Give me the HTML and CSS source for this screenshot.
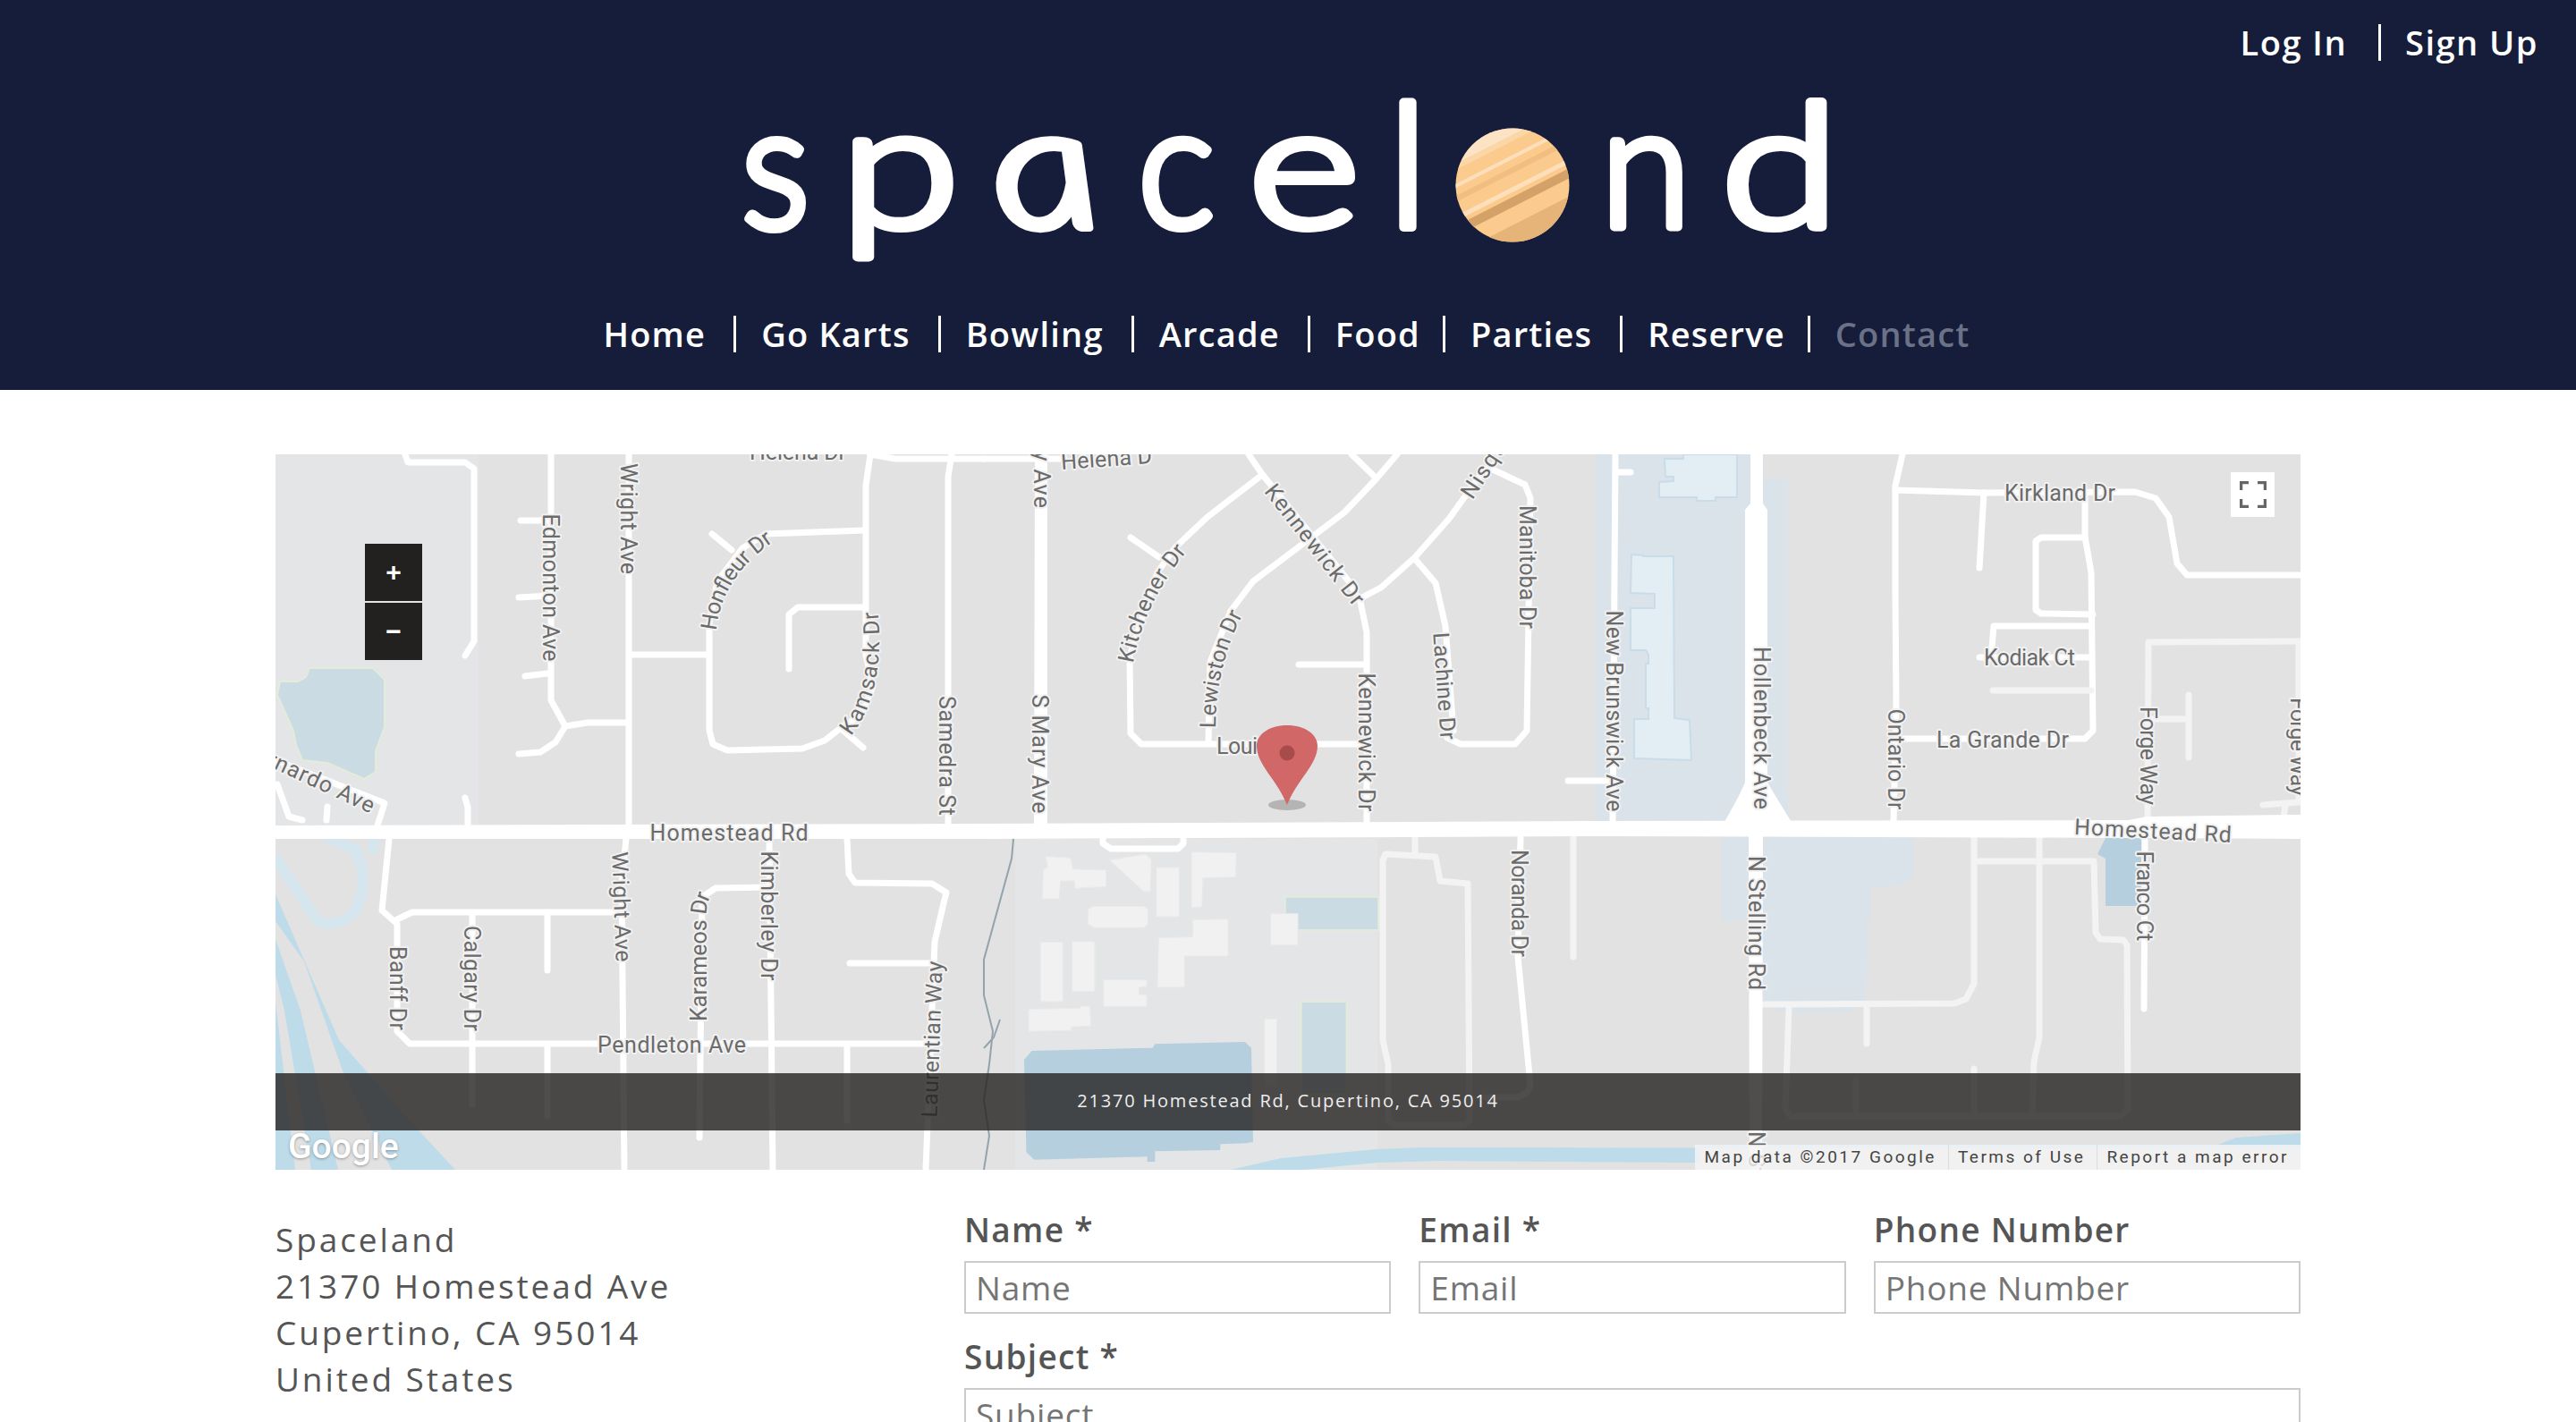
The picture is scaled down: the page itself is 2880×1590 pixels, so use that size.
FILE: index.html
```html
<!DOCTYPE html>
<html lang="en">
<head>
    <meta charset="UTF-8">
    <title>Contact - Spaceland</title>
    <link rel="stylesheet" href="styles.css">
</head>
<body>

    <header class="site-header">
        <div class="account-links">
            <a href="#">Log In</a>
            <a href="#">Sign Up</a>
        </div>

        <svg class="logo" viewBox="800 68 1280 272" role="img" aria-label="spaceland">
            <defs>
                <clipPath id="planetClip"><circle cx="64" cy="64" r="63.500"/></clipPath>
            </defs>
            <g class="logo-letters">
                <text transform="translate(867 254) scale(.93 1)">s</text>
                <text transform="translate(1006 254) scale(1.25 1)">p</text>
                <text class="logo-a" transform="translate(1183 254) scale(1.25 1) skewX(13)">a</text>
                <text transform="translate(1315 254) scale(.94 1)">c</text>
                <text transform="translate(1458 254) scale(1.24 1)">e</text>
                <text transform="translate(1574 254)">l</text>
                <text transform="translate(1840 254) scale(.95 1)">n</text>
                <text transform="translate(1990 254) scale(1.24 1)">d</text>
            </g>
            <svg x="1627" y="143" width="128" height="128" viewBox="0 0 128 128">
                <g clip-path="url(#planetClip)">
                    <rect width="128" height="128" fill="#fbcb8e"/>
                    <g transform="rotate(-27 64 64)">
                        <rect x="-40" y="-30" width="210" height="44" fill="#fde3c6"/>
                        <rect x="-40" y="14" width="210" height="6" fill="#fbd6a6"/>
                        <rect x="-40" y="34" width="210" height="4" fill="#fde0bb"/>
                        <rect x="-40" y="46" width="210" height="6" fill="#f1bd80"/>
                        <rect x="-40" y="66" width="210" height="5" fill="#fde0bb"/>
                        <rect x="-40" y="76" width="210" height="10" fill="#d4a268"/>
                        <rect x="-40" y="104" width="210" height="80" fill="#e6b378"/>
                        <rect x="-40" y="134" width="210" height="6" fill="#eec08b"/>
                    </g>
                </g>
            </svg>
        </svg>

        <nav class="main-nav">
            <a href="#">Home</a>
            <a href="#">Go Karts</a>
            <a href="#">Bowling</a>
            <a href="#">Arcade</a>
            <a href="#" class="tight">Food</a>
            <a href="#">Parties</a>
            <a href="#" class="tight">Reserve</a>
            <a href="#" class="current">Contact</a>
        </nav>
    </header>

    <main class="content">
        <section class="map">
            <svg class="map-canvas" viewBox="308 508 2264 800" aria-label="Map of Homestead Rd, Cupertino">
                <defs>
                    <path id="lblHonfleur" d="M792 704 Q798 640 860 598"/>
                    <path id="lblKamsack" d="M944 818 Q982 770 972 678"/>
                    <path id="lblKitchener" d="M1258 740 Q1270 670 1322 608"/>
                    <path id="lblLewiston" d="M1350 814 Q1350 740 1384 678"/>
                    <path id="lblKarameos" d="M781 1142 L781 1020 Q781 1005 790 992"/>
                </defs>

                <!-- land use -->
                <rect x="308" y="508" width="227" height="430" fill="#e4e5e7"/>
                <rect x="1135" y="938" width="405" height="370" fill="#e4e5e6"/>
                <rect x="1784" y="508" width="188" height="415" fill="#dbe3ea"/>
                <rect x="1972" y="535" width="27" height="388" fill="#dbe3ea"/>
                <path class="campus" d="M1925 935H2139V980Q2130 993 2091 993L2086 1117Q2075 1133 2055 1133H1999L1973 1127L1953 1030H1925Z"/>

                <!-- water -->
                <path class="pond" d="M346 747L417 747L430 760L430 813L420 840L420 863L407 871L366 853L338 850L331 833L328 817L310 777L313 762L333 762L342 757Z"/>
                <path class="ramp" d="M359 933L397 950Q414 980 397 1020Q380 1036 360 1032Q345 1020 336 1000L308 960M419 932L417 950"/>
                <path class="freeway" d="M308 1000L379 1163L458 1253L509 1308H438L384 1200L340 1075L308 1030ZM308 1050L336 1130L378 1308H348L318 1130L308 1090ZM308 1120L330 1308H308Z"/>
                <path class="river" d="M1376 1308L1432 1295L1539 1285L1590 1283L2572 1284V1267L2500 1272L2480 1280H1900V1300L1610 1298L1539 1300L1457 1308Z"/>
                <path class="lake" d="M2354 937H2394V1013H2354V960L2345 955Z"/>

                <g transform="translate(1100 920) scale(.5102 .3333)">
                    <path class="lake" d="M105 765L370 755L375 742L572 735L586 755L590 1070L575 1075L518 1078L518 1098L375 1102L375 1137L358 1137L358 1120L110 1130L93 1105L88 795Z"/>
                    <path class="pond" d="M660 248H865V360H660Z"/>
                    <path class="pond" d="M695 600H795V910H695Z"/>
                    <g class="building">
                        <path d="M135 112L190 118L195 155L268 158L268 215L215 218L200 222L198 195L168 195L165 255L128 255L130 155L140 150Z"/>
                        <path d="M275 125L355 105L367 125L365 230L350 230Z"/>
                        <path d="M378 150H428V315H378Z"/>
                        <path d="M455 98L553 100L552 182L480 185L478 282L455 285Z"/>
                        <path d="M228 290L240 280H350L360 290V340L350 352H240L228 340Z"/>
                        <path d="M458 325L535 323L535 447L440 447L440 552L380 552L383 385L458 383Z"/>
                        <path d="M124 400H173V600H124Z"/>
                        <path d="M193 398H243V566H193Z"/>
                        <path d="M262 527L357 527L357 550L340 552L340 575L357 577L357 616L262 616Z"/>
                        <path d="M98 625L210 622L212 615L232 615L235 682L192 685L192 697L98 700Z"/>
                        <path d="M628 305H688V410H628Z"/>
                        <path d="M615 658H642V885H615Z"/>
                    </g>
                </g>

                <g class="tower">
                    <path d="M1861 513L1882 513L1882 508L1942 508L1942 556L1918 556L1918 560L1897 560L1897 556L1855 556L1855 539L1871 538L1871 533L1862 533Z"/>
                    <path d="M1824 620L1837 621L1837 622L1871 622L1872 803L1889 805L1891 850L1827 848L1827 804L1843 804L1843 792L1840 792L1840 742L1843 742L1843 732L1840 727L1823 727L1823 680L1850 680L1850 664L1823 663Z"/>
                </g>
                <path class="creek" d="M1133 938L1131 960L1100 1073V1113L1110 1153L1106 1190L1100 1230L1106 1270L1100 1308"/>
                <path class="creek" d="M1118 1140L1111 1160L1100 1172"/>

                <!-- streets north of Homestead -->
                <g class="road">
                    <path d="M703 508V923"/>
                    <path d="M616 508V783L632 812L657 808H700M632 812L621 830L604 841L580 843"/>
                    <path d="M582 582H616M580 668L616 666M587 756L612 753"/>
                    <path d="M453 508L456 517H520L530 524V717L520 733M520 892L523 903V923"/>
                    <path d="M966 593L856 597L830 613L802 650L793 697V817L797 832L813 839L897 837L922 828L945 810"/>
                    <path d="M796 597L818 615M707 732H792"/>
                    <path d="M973 508L968 543V733L976 767L963 800L945 810M943 817L965 836"/>
                    <path d="M966 679H892L882 687V748"/>
                    <path d="M1064 508L1060 533V923"/>
                    <path d="M973 508L1001 513H1100"/>
                    <path d="M1100 513H1190"/>
                    <path d="M308 850L430 898L422 923M310 877L323 913L338 917M366 902L365 917"/>
                    <path d="M1396 508L1411 530L1508 650L1521 673L1528 707V921"/>
                    <path d="M1411 531L1350 578L1314 612L1294 640L1263 733L1264 820L1276 832H1523"/>
                    <path d="M1264 601L1296 623"/>
                    <path d="M1562 508L1539 535L1503 573L1401 650L1376 683L1353 740L1351 830M1511 508L1539 535"/>
                    <path d="M1523 668L1544 657L1582 623L1620 580L1656 530L1669 520"/>
                    <path d="M1669 525L1705 542L1711 557L1707 817L1694 832H1633L1618 825"/>
                    <path d="M1582 625L1605 652L1616 700L1625 817"/>
                    <path d="M1452 743H1528M1753 873H1803M1806 528H1823"/>
                    <path d="M1806 508L1803 921"/>
                    <path d="M2127 508L2119 543V667L2120 787L2117 919"/>
                    <path d="M2119 548L2218 551L2387 550L2410 557L2425 578L2434 630L2445 643H2572"/>
                    <path d="M2218 551L2213 635"/>
                    <path d="M2331 550V600L2338 640L2340 817L2331 826H2127"/>
                    <path d="M2331 601H2282L2276 605V682L2282 686L2340 687"/>
                    <path d="M2338 700H2229L2226 735M2213 735H2338"/>
                    <path class="road-soft" d="M2228 772H2338"/>
                    <path class="road-soft" d="M2570 717L2402 718L2401 913"/>
                    <path class="road-soft" d="M2402 804H2447M2447 777V847"/>
                    <path class="road-soft" d="M2570 717V897L2530 900M2555 900L2553 915"/>
                </g>

                <!-- streets south of Homestead -->
                <g class="road">
                    <path d="M435 938L427 1018L444 1033V1153L458 1167H1050"/>
                    <path d="M444 1028L461 1020H688"/>
                    <path d="M528 1023V1235M612 1022V1085M612 1168V1248"/>
                    <path d="M700 938L695 987L698 1308"/>
                    <path d="M859 992L800 993L785 1003L782 1272"/>
                    <path d="M860 938L864 1308"/>
                    <path d="M947 938L949 977L956 987L1042 988L1058 998L1055 1010L1045 1053L1035 1308"/>
                    <path d="M950 1077H1040M947 1168V1253"/>
                    <path d="M1233 938V943L1242 949H1317L1323 943V938"/>
                    <path d="M1700 937L1697 1070L1711 1213L1707 1222L1697 1227H1661"/>
                    <path class="road-soft" d="M1582 938V955M1549 955L1605 958L1610 985L1641 988L1643 1253L1636 1258H1559L1552 1253V1190L1546 1163V962L1549 955Z"/>
                    <path class="road-soft" d="M1759 937V1070"/>
                    <path class="road-soft" d="M2207 935V1100L2198 1117L2185 1122L1971 1123"/>
                    <path class="road-soft" d="M2208 963H2341L2343 1043L2348 1050L2374 1051L2378 1057L2379 1240L2371 1248H2002L1996 1240L2000 1127"/>
                    <path class="road-soft" d="M2280 935V1160L2274 1187L2272 1245"/>
                    <path class="road-soft" d="M2087 1127V1167M2075 1207V1245M2207 1195V1245"/>
                    <path d="M2398 940L2397 1128"/>
                </g>

                <!-- main roads -->
                <path class="road-main" d="M308 923L1100 921L1800 918L2380 917L2400 913L2572 911V938L2400 937L1800 935L1100 938L308 938Z"/>
                <path class="road-main" d="M1957 508H1971V563L1976 570V875L1985 890L2004 921H1927L1944 890L1951 875V570L1957 563Z"/>
                <path class="road-main" d="M1955 935H1971L1970 1308H1956Z"/>
                <path class="road-main" d="M1157 508H1171V921H1156Z"/>

                <!-- street names -->
                <g class="label">
                    <text transform="translate(892 505)" textLength="108">Helena Dr</text>
                    <text transform="translate(1237 513) rotate(-4)" textLength="102">Helena D</text>
                    <text transform="translate(1164 500) rotate(90)" textLength="136">S Mary Ave</text>
                    <text transform="translate(615 657) rotate(90)" textLength="165">Edmonton Ave</text>
                    <text transform="translate(702 580) rotate(90)" textLength="124">Wright Ave</text>
                    <text textLength="130"><textPath href="#lblHonfleur">Honfleur Dr</textPath></text>
                    <text textLength="140"><textPath href="#lblKamsack">Kamsack Dr</textPath></text>
                    <text transform="translate(1058 845) rotate(90)" textLength="134">Samedra St</text>
                    <text transform="translate(1162 843) rotate(90)" textLength="133">S Mary Ave</text>
                    <text textLength="145"><textPath href="#lblKitchener">Kitchener Dr</textPath></text>
                    <text textLength="136"><textPath href="#lblLewiston">Lewiston Dr</textPath></text>
                    <text transform="translate(1383 834)" textLength="46">Loui</text>
                    <text transform="translate(1470 609) rotate(52)" textLength="164">Kennewick Dr</text>
                    <text transform="translate(1527 830) rotate(90)" textLength="155">Kennewick Dr</text>
                    <text transform="translate(1615 767) rotate(86)" textLength="120">Lachine Dr</text>
                    <text transform="translate(1707 634) rotate(90)" textLength="138">Manitoba Dr</text>
                    <text transform="translate(1680 492) rotate(-57)" textLength="150">Nisqually Dr</text>
                    <text transform="translate(1804 795) rotate(90)" textLength="225">New Brunswick Ave</text>
                    <text transform="translate(1969 814) rotate(90)" textLength="182">Hollenbeck Ave</text>
                    <text transform="translate(2119 849) rotate(90)" textLength="113">Ontario Dr</text>
                    <text transform="translate(2303 551)" textLength="124">Kirkland Dr</text>
                    <text transform="translate(2269 735)" textLength="102">Kodiak Ct</text>
                    <text transform="translate(2239 827)" textLength="148">La Grande Dr</text>
                    <text transform="translate(2401 845) rotate(90)" textLength="110">Forge Way</text>
                    <text transform="translate(2569 835) rotate(90)" textLength="110">Forge Way</text>
                    <text transform="translate(815 931)" textLength="177">Homestead Rd</text>
                    <text transform="translate(2407 929) rotate(3)" textLength="176">Homestead Rd</text>
                    <text transform="translate(345 868) rotate(25)" textLength="160">Bernardo Ave</text>
                    <text transform="translate(695 1014) rotate(88)" textLength="123">Wright Ave</text>
                    <text transform="translate(444 1105) rotate(90)" textLength="94">Banff Dr</text>
                    <text transform="translate(527 1094) rotate(90)" textLength="118">Calgary Dr</text>
                    <text textLength="145"><textPath href="#lblKarameos">Karameos Dr</textPath></text>
                    <text transform="translate(859 1024) rotate(90)" textLength="145">Kimberley Dr</text>
                    <text transform="translate(1042 1162) rotate(-88)" textLength="175">Laurentian Way</text>
                    <text transform="translate(751 1168)" textLength="166">Pendleton Ave</text>
                    <text transform="translate(1698 1010) rotate(90)" textLength="120">Noranda Dr</text>
                    <text transform="translate(1963 1032) rotate(90)" textLength="150">N Stelling Rd</text>
                    <text transform="translate(2397 1002) rotate(90)" textLength="101">Franco Ct</text>
                    <text transform="translate(1963 1340) rotate(90)" textLength="150">N Stelling Rd</text>
                </g>

                <!-- pin -->
                <ellipse cx="1439" cy="900" rx="21" ry="6" fill="#b4b4b4"/>
                <path d="M1439 900C1428 872 1405 855 1405 834C1405 821 1419 811 1439 811C1459 811 1473 821 1473 834C1473 855 1450 872 1439 900Z" fill="#d16767"/>
                <ellipse cx="1439" cy="842" rx="8.500" ry="8.500" fill="#a84b4b"/>
            </svg>

            <div class="zoom-controls">
                <button type="button" class="zoom-btn">+</button>
                <button type="button" class="zoom-btn">−</button>
            </div>

            <button type="button" class="fullscreen-btn" aria-label="Toggle fullscreen view">
                <svg viewBox="0 0 30 30" width="30" height="30">
                    <path d="M1.500 10V1.500H10M20 1.500H28.500V10M28.500 20V28.500H20M10 28.500H1.500V20" fill="none" stroke="#666" stroke-width="3.500"/>
                </svg>
            </button>

            <div class="map-address">21370 Homestead Rd, Cupertino, CA 95014</div>
            <div class="google-mark">Google</div>
            <div class="map-attribution">
                <span>Map data ©2017 Google</span>
                <span>Terms of Use</span>
                <span>Report a map error</span>
            </div>
        </section>

        <section class="contact">
            <address class="contact-address">
                Spaceland<br>
                21370 Homestead Ave<br>
                Cupertino, CA 95014<br>
                United States
            </address>

            <form class="contact-form">
                <div class="field">
                    <label for="name">Name *</label>
                    <input type="text" id="name" placeholder="Name">
                </div>
                <div class="field">
                    <label for="email">Email *</label>
                    <input type="text" id="email" placeholder="Email">
                </div>
                <div class="field">
                    <label for="phone">Phone Number</label>
                    <input type="text" id="phone" placeholder="Phone Number">
                </div>
                <div class="field field-wide">
                    <label for="subject">Subject *</label>
                    <input type="text" id="subject" placeholder="Subject">
                </div>
            </form>
        </section>
    </main>

</body>
</html>
```

FILE: styles.css
```css
/* Base */
html, body {
    height: 100%;
    overflow: hidden;
}

body {
    margin: 0;
    font-family: "Open Sans", "Noto Sans", sans-serif;
    color: #555;
    background: #fff;
}

a {
    color: inherit;
    text-decoration: none;
}

/* Header */
.site-header {
    height: 436px;
    box-sizing: border-box;
    background: #161d3a;
    color: #fff;
    display: flex;
    flex-direction: column;
    align-items: center;
}

.account-links {
    align-self: flex-end;
    display: flex;
    margin-top: 27px;
    padding-right: 42px;
    font-size: 38px;
    font-weight: 600;
    line-height: 41px;
    letter-spacing: 1.500px;
}

.account-links a + a {
    margin-left: 35px;
    padding-left: 27px;
    border-left: 3px solid #fff;
}

.logo {
    display: block;
    flex: none;
    width: 1280px;
    height: 272px;
}

.logo-letters text {
    font-family: Lato, "Open Sans", sans-serif;
    font-size: 192px;
    font-weight: 300;
    fill: #fff;
    stroke: #fff;
    stroke-width: 10px;
    stroke-linejoin: round;
    text-anchor: middle;
}

.logo-letters .logo-a {
    font-style: italic;
}

.main-nav {
    display: flex;
    margin-top: 13px;
    font-size: 38px;
    font-weight: 600;
    line-height: 41px;
    letter-spacing: 1.200px;
}

.main-nav a {
    padding: 0 31px 0 28px;
    border-left: 3px solid #fff;
}

.main-nav a:first-child {
    border-left: 0;
}

.main-nav .tight {
    padding-right: 25px;
}

.main-nav .current {
    color: #6b7187;
}

/* Map */
.content {
    padding: 72px 308px 0;
}

.map {
    position: relative;
    height: 800px;
    background: #e2e2e2;
    overflow: hidden;
}

.map-canvas {
    display: block;
    width: 100%;
    height: 100%;
}

.road path {
    fill: none;
    stroke: #fff;
    stroke-width: 7;
    stroke-linecap: round;
    stroke-linejoin: round;
}

.road .road-soft {
    stroke: #f3f3f3;
}

.road-main {
    fill: #fff;
}

.campus {
    fill: #dbe3ea;
}

.pond {
    fill: #cbdbe3;
    stroke: #e3ecd9;
    stroke-width: 2;
    vector-effect: non-scaling-stroke;
}

.lake {
    fill: #b5cfde;
}

.ramp {
    fill: none;
    stroke: #d6e6ee;
    stroke-width: 12;
    stroke-linecap: round;
}

.freeway,
.river {
    fill: #bedbe9;
}

.building path {
    fill: #f1f1f1;
    stroke: #e9e9e9;
    stroke-width: 1;
    vector-effect: non-scaling-stroke;
}

.tower path {
    fill: #e3eef4;
    stroke: #c8dcea;
    stroke-width: 2;
}

.creek {
    fill: none;
    stroke: #93a3ab;
    stroke-width: 2;
}

.label text {
    font-family: Roboto, sans-serif;
    font-size: 25px;
    fill: #6b6b6b;
    stroke: #f1f1f1;
    stroke-width: 4px;
    stroke-linejoin: round;
    paint-order: stroke;
    text-anchor: middle;
    dominant-baseline: central;
}

.label text:has(textPath) {
    text-anchor: start;
}

.zoom-controls {
    position: absolute;
    top: 100px;
    left: 100px;
    display: flex;
    flex-direction: column;
    gap: 2px;
}

.zoom-btn {
    width: 64px;
    height: 64px;
    padding: 0;
    border: 0;
    background: #22211f;
    color: #fff;
    font-family: "Liberation Sans", sans-serif;
    font-size: 30px;
    font-weight: 700;
    line-height: 64px;
}

.fullscreen-btn {
    position: absolute;
    top: 20px;
    right: 29px;
    display: flex;
    align-items: center;
    justify-content: center;
    width: 49px;
    height: 50px;
    padding: 0;
    border: 0;
    background: #fff;
}

.map-address {
    position: absolute;
    top: 692px;
    left: 0;
    right: 0;
    height: 64px;
    background: rgba(36, 34, 32, 0.8);
    color: #eee;
    font-size: 20px;
    line-height: 62px;
    letter-spacing: 1.800px;
    text-align: center;
}

.google-mark {
    position: absolute;
    left: 14px;
    bottom: 4px;
    font-family: Roboto, sans-serif;
    font-size: 39px;
    font-weight: 500;
    line-height: 44px;
    color: #fff;
    text-shadow: 0 1px 3px rgba(0, 0, 0, 0.35);
}

.map-attribution {
    position: absolute;
    right: 0;
    bottom: 0;
    display: flex;
    height: 28px;
    background: rgba(245, 245, 245, 0.8);
    font-family: Roboto, sans-serif;
    font-size: 19px;
    line-height: 28px;
    letter-spacing: 2.500px;
    color: #444;
}

.map-attribution span {
    padding: 0 13px 0 10px;
}

.map-attribution span + span {
    border-left: 1px solid #ddd;
}

/* Address and form */
.contact {
    display: grid;
    grid-template-columns: 770px 1fr;
}

.contact-address {
    padding-top: 52px;
    font-size: 37px;
    font-style: normal;
    line-height: 52px;
    letter-spacing: 2.900px;
}

.contact-form {
    display: grid;
    grid-template-columns: repeat(3, 1fr);
    gap: 23px 31px;
    padding-top: 42px;
}

.field-wide {
    grid-column: 1 / -1;
}

.field label {
    display: block;
    margin-bottom: 10px;
    font-size: 37px;
    font-weight: 600;
    line-height: 50px;
    letter-spacing: 1.300px;
}

.field input {
    display: block;
    width: 100%;
    height: 59px;
    box-sizing: border-box;
    padding: 0 11px;
    border: 2px solid #ccc;
    border-radius: 0;
    font-family: inherit;
    font-size: 37px;
    letter-spacing: 0.800px;
    color: #555;
}

.field input::placeholder {
    color: #757575;
}
```
